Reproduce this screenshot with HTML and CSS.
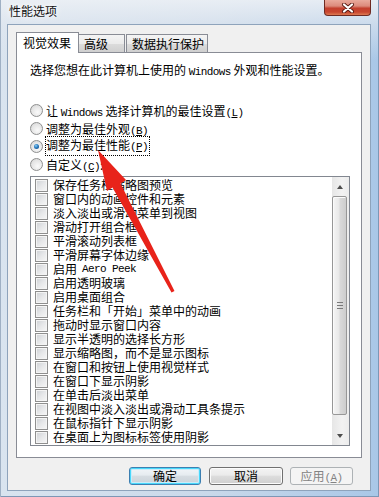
FILE: index.html
```html
<!DOCTYPE html>
<html>
	<head>
		<meta charset="utf-8">
		<title>性能选项</title>
		<link rel="stylesheet" href="styles.css">
	</head>
	<body>
		<div class="window">
			<div class="titlebar">
				<span class="title">性能选项</span>
				<span class="close">
					<svg width="14" height="10" viewBox="0 0 14 10">
						<path d="M3 1.5 L11 8.5 M11 1.5 L3 8.5" stroke="#5a1c14" stroke-width="4" stroke-linecap="round"/>
						<path d="M3 1.5 L11 8.5 M11 1.5 L3 8.5" stroke="#fff" stroke-width="2.2" stroke-linecap="round"/>
					</svg>
				</span>
			</div>
			<div class="client">
				<div class="tabs">
					<div class="tab active">视觉效果</div>
					<div class="tab t2">高级</div>
					<div class="tab t3">数据执行保护</div>
				</div>
				<div class="panel">
					<p class="intro">选择您想在此计算机上使用的 <span class="en">Windows</span> 外观和性能设置。</p>
					<div class="radios">
						<div class="radio"><span class="dot"></span><span>让 <span class="en">Windows</span> 选择计算机的最佳设置<span class="en">(<u>L</u>)</span></span></div>
						<div class="radio"><span class="dot"></span><span>调整为最佳外观<span class="en">(<u>B</u>)</span></span></div>
						<div class="radio"><span class="dot on"></span><span class="focus">调整为最佳性能<span class="en">(<u>P</u>)</span></span></div>
						<div class="radio"><span class="dot"></span><span>自定义<span class="en">(<u>C</u>)</span>:</span></div>
					</div>
					<div class="listbox">
						<div class="items">
							<div class="item"><span class="chk"></span>保存任务栏缩略图预览</div>
							<div class="item"><span class="chk"></span>窗口内的动画控件和元素</div>
							<div class="item"><span class="chk"></span>淡入淡出或滑动菜单到视图</div>
							<div class="item"><span class="chk"></span>滑动打开组合框</div>
							<div class="item"><span class="chk"></span>平滑滚动列表框</div>
							<div class="item"><span class="chk"></span>平滑屏幕字体边缘</div>
							<div class="item"><span class="chk"></span>启用 <span class="en">Aero Peek</span></div>
							<div class="item"><span class="chk"></span>启用透明玻璃</div>
							<div class="item"><span class="chk"></span>启用桌面组合</div>
							<div class="item"><span class="chk"></span>任务栏和「开始」菜单中的动画</div>
							<div class="item"><span class="chk"></span>拖动时显示窗口内容</div>
							<div class="item"><span class="chk"></span>显示半透明的选择长方形</div>
							<div class="item"><span class="chk"></span>显示缩略图，而不是显示图标</div>
							<div class="item"><span class="chk"></span>在窗口和按钮上使用视觉样式</div>
							<div class="item"><span class="chk"></span>在窗口下显示阴影</div>
							<div class="item"><span class="chk"></span>在单击后淡出菜单</div>
							<div class="item"><span class="chk"></span>在视图中淡入淡出或滑动工具条提示</div>
							<div class="item"><span class="chk"></span>在鼠标指针下显示阴影</div>
							<div class="item"><span class="chk"></span>在桌面上为图标标签使用阴影</div>
						</div>
						<div class="scrollbar">
							<div class="sb-btn"><span class="up"></span></div>
							<div class="thumb"><span class="grip"></span></div>
							<div class="track"></div>
							<div class="sb-btn"><span class="down"></span></div>
						</div>
					</div>
				</div>
				<div class="buttons">
					<div class="btn default">确定</div>
					<div class="btn cancel">取消</div>
					<div class="btn disabled">应用<span class="en">(<u>A</u>)</span></div>
				</div>
			</div>
			<svg class="arrow" width="379" height="497" viewBox="0 0 379 497">
				<polygon points="98,150 126,180 120.5,183.5 174.5,291 171.5,292.5 112.5,187.5 107,191" fill="#e8231a"/>
			</svg>
		</div>
	</body>
</html>
```
FILE: styles.css
```css
*{box-sizing: border-box;}
body{margin: 0; width: 379px; height: 497px; overflow: hidden; font: 12px "Noto Sans CJK SC", sans-serif; color: #000;}
.window{position: relative; width: 379px; height: 497px; display: flex; flex-direction: column;
	background: linear-gradient(180deg, rgba(236,240,245,.9) 0, rgba(226,232,240,.6) 24px, rgba(255,255,255,0) 60px), linear-gradient(90deg, #d9e4ef 0, #c9d9ea 55%, #a9c7e7 100%);
	box-shadow: inset 1px 0 0 #9fb0c4, inset -1px 0 0 #7d97b5, inset 0 -1px 0 #7d97b5;}
.titlebar{height: 24px; display: flex; align-items: flex-start; padding: 0 8px 0 9px;}
.title{padding-top: 3px; line-height: 16px; font-size: 12px; color: #111; text-shadow: 0 0 5px #fff, 0 0 8px #fff;}
.close{margin-left: auto; width: 47px; height: 16px; border: 1px solid #6e2a22; border-top: none; border-radius: 0 0 4px 4px; display: flex; align-items: center; justify-content: center;
	background: linear-gradient(180deg, #e9aa9c 0, #dc8b7c 40%, #c3402e 55%, #c8462f 80%, #dd7a52 100%);}
.client{margin: 0 8px 6px 7px; flex: 1; border: 1px solid #8ea3bb; background: #f0f0f0; padding: 0 8px;}
.tabs{height: 27px; display: flex; align-items: flex-end;}
.tab{height: 18px; border: 1px solid #898c95; border-bottom: none; padding-left: 5px; line-height: 17px; white-space: nowrap;
	background: linear-gradient(180deg, #f4f4f4 0, #ebebeb 50%, #dcdcdc 51%, #cfcfcf 100%);}
.tab.active{height: 21px; width: 63px; margin-bottom: -1px; background: #fff; position: relative; z-index: 1; padding-left: 6px; line-height: 20px;}
.tab.t2{width: 47px; margin-left: -1px;}
.tab.t3{width: 82px; margin-left: 1px;}
.panel{width: 346px; height: 406px; border: 1px solid #898c95; background: #fff; padding-left: 13px;}
.intro{margin: 10px 0 0; line-height: 14px; white-space: nowrap;}
.en{font-family: "Liberation Mono", monospace; font-size: 11px; letter-spacing: -0.6px;}
u{text-underline-offset: 1px;}
.radios{margin-top: 22px;}
.radio{height: 18px; display: flex; align-items: center; gap: 3px; white-space: nowrap;}
.dot{width: 13px; height: 13px; border-radius: 50%; border: 1px solid #8e8f8f; flex-shrink: 0; position: relative;
	background: radial-gradient(circle at 60% 65%, #fafafa 0, #e4e4e4 60%, #cfcfcf 100%);}
.dot.on::after{content: ""; position: absolute; left: 3px; top: 3px; width: 5px; height: 5px; border-radius: 50%;
	background: radial-gradient(circle at 40% 35%, #8fd0f6 0, #2a7cc0 45%, #0b3e78 100%);}
.focus{border: 1px dotted #000; line-height: 16px; margin-left: -1px; padding-right: 1px;}
.listbox{margin-top: 3px; width: 320px; height: 270px; border: 1px solid #828790; display: flex;}
.items{flex: 1; padding: 1px 0 0 4px; overflow: hidden;}
.item{height: 14px; display: flex; align-items: center; gap: 5px; line-height: 14px; white-space: nowrap;}
.chk{width: 13px; height: 13px; flex-shrink: 0; border: 1px solid #8f8f8f; box-shadow: inset 0 0 0 1px #f4f4f4;
	background: linear-gradient(135deg, #cdd0d4 0, #e6e7e9 50%, #f7f7f7 100%);}
.scrollbar{width: 17px; display: flex; flex-direction: column; background: linear-gradient(90deg, #e6e6e6, #f2f2f2 60%, #ececec);}
.sb-btn{height: 19px; display: flex; align-items: center; justify-content: center; padding-right: 2px;}
.up{width: 0; height: 0; border: 3.5px solid transparent; border-bottom: 4px solid #4d4d4d; border-top: none;}
.down{width: 0; height: 0; border: 3.5px solid transparent; border-top: 4px solid #4d4d4d; border-bottom: none;}
.thumb{height: 219px; width: 15px; border: 1px solid #979797; border-radius: 2px; display: flex; align-items: center; justify-content: center;
	background: linear-gradient(90deg, #f5f5f5 0, #e9e9e9 45%, #d9d9d9 55%, #cdcdcd 100%); box-shadow: inset 1px 1px 0 #fbfbfb;}
.grip{width: 6px; height: 7px; background: repeating-linear-gradient(180deg, #7a7a7a 0 1px, transparent 1px 3px);}
.track{flex: 1;}
.buttons{display: flex; justify-content: flex-end; margin-top: 9px; padding-right: 9px;}
.btn{height: 18px; line-height: 16px; text-align: center; border: 1px solid #707070; border-radius: 3px; white-space: nowrap;
	background: linear-gradient(180deg, #f3f3f3 0, #ebebeb 45%, #dddddd 50%, #cfcfcf 100%); box-shadow: inset 0 0 0 1px #fcfcfc;}
.btn.default{width: 72px; margin-right: 8px; border-color: #3c7fb1; box-shadow: inset 0 0 0 1px #48d8fb, inset 0 0 0 2px #c9ecfa;
	background: linear-gradient(180deg, #f1f5f8 0, #e6ecf0 45%, #d6dde2 50%, #cbd3d9 100%);}
.btn.cancel{width: 74px; margin-right: 7px;}
.btn.disabled{width: 63px; border-color: #adb2b5; background: #f4f4f4; color: #838383; box-shadow: none;}
.arrow{position: absolute; left: 0; top: 0; pointer-events: none;}
```
